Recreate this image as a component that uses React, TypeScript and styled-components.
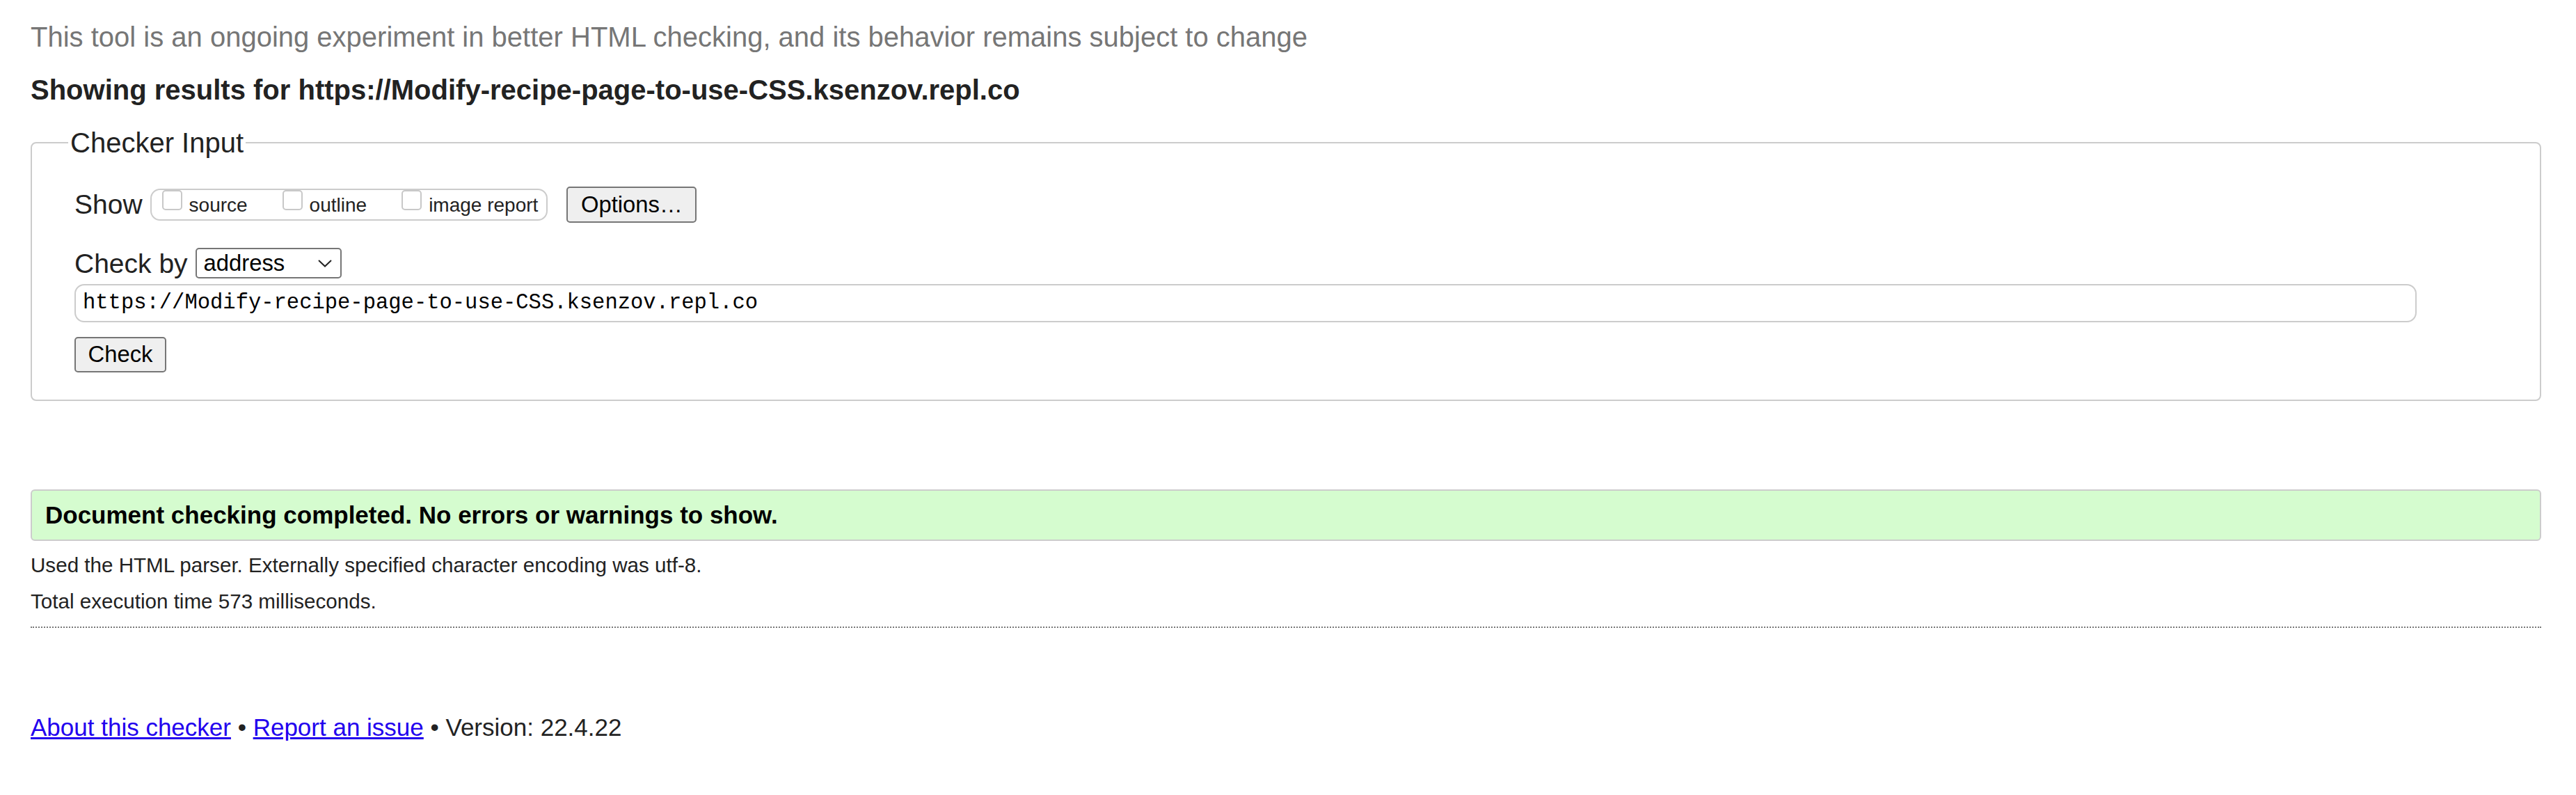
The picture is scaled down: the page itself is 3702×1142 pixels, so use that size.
import React from 'react';
import styled, { createGlobalStyle } from 'styled-components';

const GlobalStyle = createGlobalStyle`
  html, body { margin: 0; padding: 0; background: #fff; }
  body { font-family: "Liberation Sans", Arial, sans-serif; color: #222; }
  * { box-sizing: border-box; }
`;

const Page = styled.main`
  padding: 0 50px 60px 44px;
`;

const Intro = styled.p`
  margin: 31px 0 0;
  font-size: 40px;
  line-height: 45px;
  color: #767676;
`;

const Heading = styled.h2`
  margin: 30.5px 0 0;
  font-size: 40px;
  line-height: 45px;
  font-weight: bold;
  color: #222;
`;

const InputFieldset = styled.fieldset`
  margin: 31px 0 0;
  padding: 40px 0 39px 61px;
  border: 2px solid #ccc;
  border-radius: 8px;
  min-width: 0;
`;

const Legend = styled.legend`
  margin-left: -9px;
  padding: 0 3px;
  font-size: 40px;
  line-height: 45px;
  color: #222;
`;

const Row = styled.div<{ $top?: number }>`
  display: flex;
  align-items: center;
  margin-top: ${p => p.$top ?? 0}px;
`;

const RowLabel = styled.span`
  font-size: 39px;
  line-height: 45px;
  color: #222;
  margin-right: 11px;
`;

const CheckGroup = styled.div`
  display: flex;
  align-items: flex-start;
  gap: 50px;
  height: 46px;
  padding: 0 12px 0 15px;
  border: 2px solid #ccc;
  border-radius: 14px;
`;

const CheckLabel = styled.label`
  display: flex;
  align-items: flex-start;
  gap: 10px;
`;

const CheckBox = styled.input`
  appearance: none;
  margin: 0;
  width: 29px;
  height: 29px;
  border: 2px solid #c8c8c8;
  border-radius: 5px;
  background: #fff;
`;

const CheckText = styled.span`
  margin-top: 6px;
  font-size: 28px;
  line-height: 32px;
  color: #222;
`;

const Button = styled.button<{ $w: number; $h: number }>`
  width: ${p => p.$w}px;
  height: ${p => p.$h}px;
  padding: 0;
  font-family: "Liberation Sans", Arial, sans-serif;
  font-size: 32.8px;
  color: #000;
  background: #efefef;
  border: 2px solid #767676;
  border-radius: 5px;
`;

const OptionsButton = styled(Button)`
  margin-left: 27px;
`;

const SelectBox = styled.div`
  display: flex;
  align-items: center;
  justify-content: space-between;
  width: 210px;
  height: 44px;
  padding: 0 12px 0 10px;
  border: 2px solid #767676;
  border-radius: 5px;
  font-size: 32.8px;
  color: #000;
`;

const UrlInput = styled.input`
  display: block;
  margin-top: 7px;
  width: 3366px;
  height: 55px;
  padding: 0 10px;
  border: 2px solid #ccc;
  border-radius: 14px;
  font-family: "Liberation Mono", "Courier New", monospace;
  font-size: 30.5px;
  color: #000;
  outline: none;
`;

const CheckButtonRow = styled.div`
  margin-top: 21px;
  display: flex;
`;

const Success = styled.div`
  margin-top: 127px;
  padding: 12px 19px 13px;
  border: 2px solid #ccc;
  border-radius: 6px;
  background: #d5fccf;
  font-size: 35px;
  line-height: 45px;
  font-weight: bold;
  color: #000;
`;

const Info = styled.p<{ $top: number }>`
  margin: ${p => p.$top}px 0 0;
  font-size: 29.6px;
  line-height: 34px;
  color: #222;
`;

const Rule = styled.hr`
  margin: 19.3px 0 0;
  height: 0;
  border: 0;
  border-top: 2px dotted #777;
`;

const Footer = styled.p`
  margin: 124px 0 0;
  font-size: 35px;
  line-height: 38px;
  color: #222;
`;

const Link = styled.a`
  color: #2200ee;
  text-decoration: underline;
`;

export default function App() {
  return (
    <>
      <GlobalStyle />
      <Page>
        <Intro>This tool is an ongoing experiment in better HTML checking, and its behavior remains subject to change</Intro>
        <Heading>Showing results for https://Modify-recipe-page-to-use-CSS.ksenzov.repl.co</Heading>
        <InputFieldset>
          <Legend>Checker Input</Legend>
          <Row>
            <RowLabel>Show</RowLabel>
            <CheckGroup>
              <CheckLabel><CheckBox type="checkbox" /><CheckText>source</CheckText></CheckLabel>
              <CheckLabel><CheckBox type="checkbox" /><CheckText>outline</CheckText></CheckLabel>
              <CheckLabel><CheckBox type="checkbox" /><CheckText>image report</CheckText></CheckLabel>
            </CheckGroup>
            <OptionsButton $w={187} $h={52}>Options…</OptionsButton>
          </Row>
          <Row $top={36}>
            <RowLabel>Check by</RowLabel>
            <SelectBox>
              <span>address</span>
              <svg width="20" height="11" viewBox="0 0 20 11" fill="none">
                <polyline points="1,1 10,9.5 19,1" stroke="#222" strokeWidth="2" />
              </svg>
            </SelectBox>
          </Row>
          <UrlInput readOnly defaultValue="https://Modify-recipe-page-to-use-CSS.ksenzov.repl.co" />
          <CheckButtonRow>
            <Button $w={132} $h={51}>Check</Button>
          </CheckButtonRow>
        </InputFieldset>
        <Success>Document checking completed. No errors or warnings to show.</Success>
        <Info $top={18.7}>Used the HTML parser. Externally specified character encoding was utf-8.</Info>
        <Info $top={18}>Total execution time 573 milliseconds.</Info>
        <Rule />
        <Footer>
          <Link href="#">About this checker</Link> • <Link href="#">Report an issue</Link> • Version: 22.4.22
        </Footer>
      </Page>
    </>
  );
}
